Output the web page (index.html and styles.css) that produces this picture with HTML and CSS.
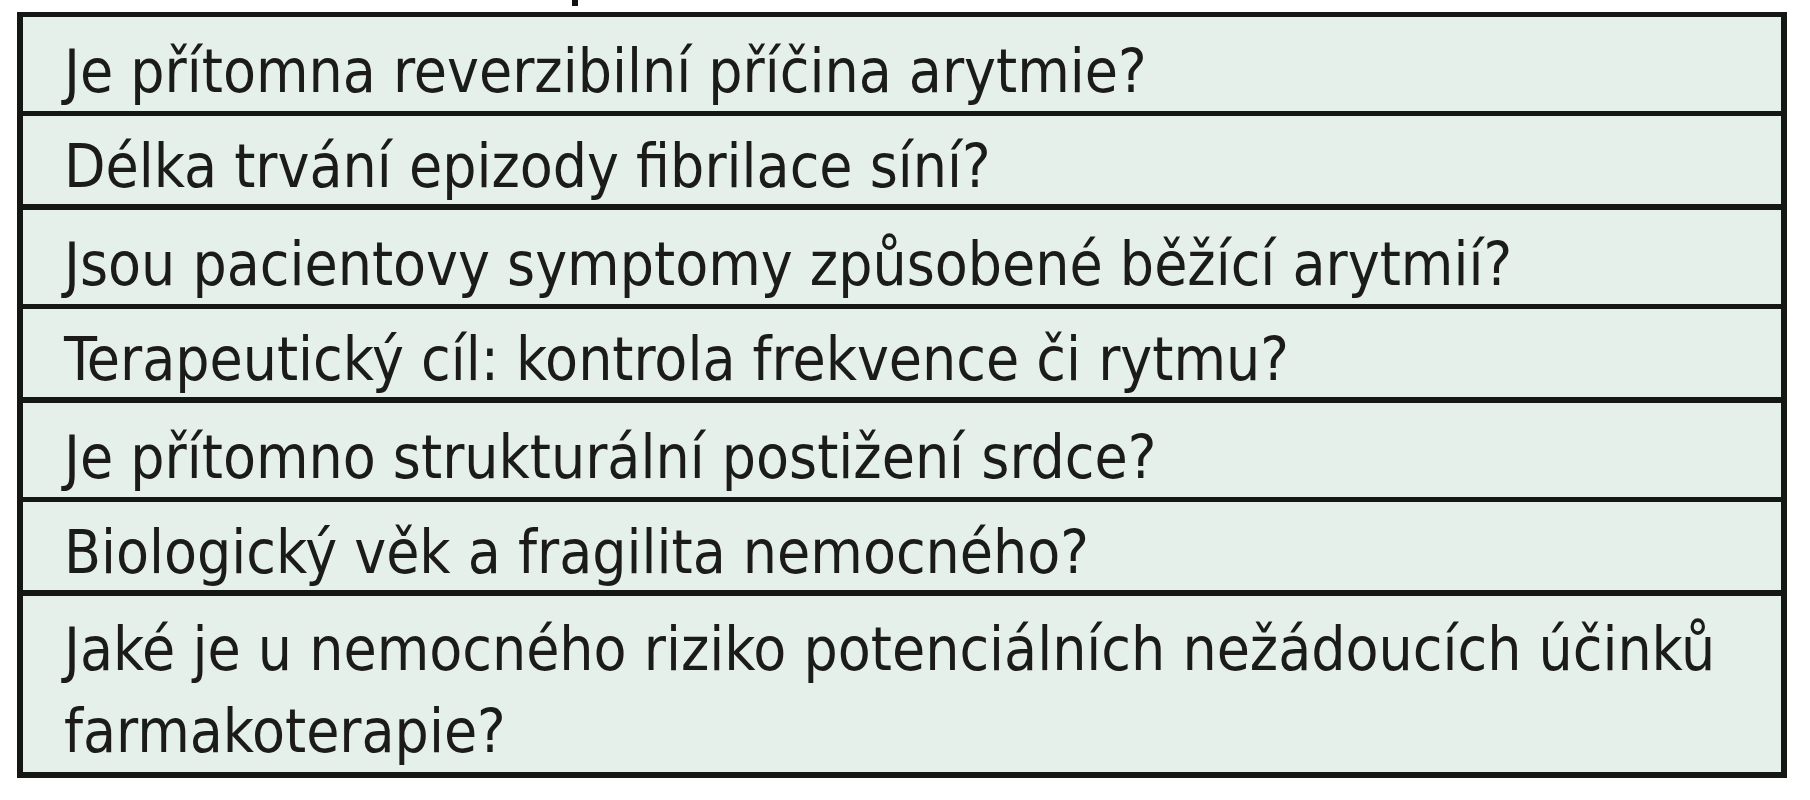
FILE: index.html
```html
<!DOCTYPE html>
<html lang="cs">
<head>
<meta charset="utf-8">
<title>Otázky</title>
<link rel="stylesheet" href="styles.css">
</head>
<body>
<div class="page">
  <div class="caption"><span class="caption-mark"></span></div>
  <div class="table">
    <div class="row">Je přítomna reverzibilní příčina arytmie?</div>
    <div class="row">Délka trvání epizody fibrilace síní?</div>
    <div class="row">Jsou pacientovy symptomy způsobené běžící arytmií?</div>
    <div class="row">Terapeutický cíl: kontrola frekvence či rytmu?</div>
    <div class="row">Je přítomno strukturální postižení srdce?</div>
    <div class="row">Biologický věk a fragilita nemocného?</div>
    <div class="row">Jaké je u nemocného riziko potenciálních nežádoucích účinků farmakoterapie?</div>
  </div>
</div>
</body>
</html>
```

FILE: styles.css
```css
html, body {
  margin: 0;
  padding: 0;
  background: #ffffff;
}

.page {
  padding-left: 17px;
}

.caption {
  height: 12px;
}

.caption-mark {
  display: block;
  width: 6px;
  height: 6px;
  margin-left: 555px;
  background: #111111;
}

.table {
  box-sizing: border-box;
  width: 1770px;
  border-style: solid;
  border-color: #151715;
  border-width: 5px 6px 6px 6px;
  background: #e6f0eb;
  font-family: "DejaVu Sans Condensed", "Liberation Sans", sans-serif;
  font-size: 60px;
  color: #1b1b1b;
}

.row {
  padding: 14px 40px 0 41px;
  line-height: 80px;
  border-bottom: 5px solid #151715;
}

.row:nth-child(even) {
  padding-top: 13px;
  line-height: 75px;
  border-bottom-width: 6px;
}

.row:last-child {
  padding-top: 12px;
  line-height: 82px;
  border-bottom: none;
}
```
